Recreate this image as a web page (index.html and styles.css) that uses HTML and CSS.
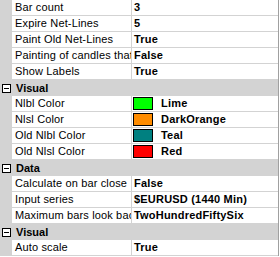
FILE: index.html
```html
<!DOCTYPE html>
<html lang="en">
<head>
    <meta charset="UTF-8">
    <title>Properties</title>
    <link rel="stylesheet" href="styles.css">
</head>
<body>

    <div class="grid">
        <div class="row"><div class="name">Bar count</div><div class="value">3</div></div>
        <div class="row"><div class="name">Expire Net-Lines</div><div class="value">5</div></div>
        <div class="row"><div class="name">Paint Old Net-Lines</div><div class="value">True</div></div>
        <div class="row"><div class="name">Painting of candles that</div><div class="value">False</div></div>
        <div class="row"><div class="name">Show Labels</div><div class="value">True</div></div>

        <div class="cat"><svg class="toggle" width="9" height="9" viewBox="0 0 9 9"><rect x="0.5" y="0.5" width="8" height="8" fill="#fff" stroke="#000"/><path d="M2 4.5h5" stroke="#000"/></svg>Visual</div>
        <div class="row"><div class="name">Nlbl Color</div><div class="value"><span class="swatch lime"></span>Lime</div></div>
        <div class="row"><div class="name">Nlsl Color</div><div class="value"><span class="swatch orange"></span>DarkOrange</div></div>
        <div class="row"><div class="name">Old Nlbl Color</div><div class="value"><span class="swatch teal"></span>Teal</div></div>
        <div class="row"><div class="name">Old Nlsl Color</div><div class="value"><span class="swatch red"></span>Red</div></div>

        <div class="cat"><svg class="toggle" width="9" height="9" viewBox="0 0 9 9"><rect x="0.5" y="0.5" width="8" height="8" fill="#fff" stroke="#000"/><path d="M2 4.5h5" stroke="#000"/></svg>Data</div>
        <div class="row"><div class="name">Calculate on bar close</div><div class="value">False</div></div>
        <div class="row"><div class="name">Input series</div><div class="value">$EURUSD (1440 Min)</div></div>
        <div class="row"><div class="name">Maximum bars look back</div><div class="value">TwoHundredFiftySix</div></div>

        <div class="cat"><svg class="toggle" width="9" height="9" viewBox="0 0 9 9"><rect x="0.5" y="0.5" width="8" height="8" fill="#fff" stroke="#000"/><path d="M2 4.5h5" stroke="#000"/></svg>Visual</div>
        <div class="row"><div class="name">Auto scale</div><div class="value">True</div></div>
    </div>

</body>
</html>
```

FILE: styles.css
```css
body {
    margin: 0;
    background: #fff;
    font-family: "Liberation Sans", Arial, sans-serif;
    font-size: 11px;
    color: #000;
}

.grid {
    width: 278px;
    background: #d3d3d3;
    border-right: 1px solid #a0a0a0;
}

.row {
    display: grid;
    grid-template-columns: 119px 1fr;
    column-gap: 1px;
    padding-left: 12px;
    padding-bottom: 1px;
    height: 15px;
}

.name, .value {
    background: #fff;
    line-height: 15px;
    white-space: nowrap;
    overflow: hidden;
}

.name {
    padding-left: 3px;
    letter-spacing: 0.15px;
}

.value {
    display: flex;
    align-items: center;
    padding-left: 2px;
    font-weight: bold;
    letter-spacing: 0.2px;
}

.swatch {
    width: 20px;
    height: 13px;
    margin-left: -1px;
    margin-right: 8px;
    box-sizing: border-box;
    border: 1px solid #000;
}

.lime { background: #00ff00; }
.orange { background: #ff8c00; }
.teal { background: #008080; }
.red { background: #ff0000; }

.cat {
    display: flex;
    align-items: center;
    height: 16px;
    padding-left: 2px;
    gap: 5px;
    font-weight: bold;
}

.toggle {
    display: block;
}
```
